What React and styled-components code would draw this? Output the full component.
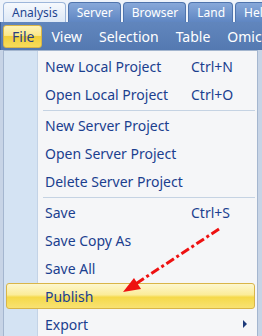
import React from "react"
import styled, { createGlobalStyle } from "styled-components"

const GlobalStyle = createGlobalStyle`
  *, *::before, *::after {
    box-sizing: border-box;
  }
  body {
    margin: 0;
    font-family: "Noto Sans", "Open Sans", sans-serif;
  }
`

const tabs = ["Analysis", "Server", "Browser", "Land", "Help"]
const menus = ["File", "View", "Selection", "Table", "Omics"]

const items = [
  { label: "New Local Project", key: "Ctrl+N" },
  { label: "Open Local Project", key: "Ctrl+O" },
  "sep",
  { label: "New Server Project" },
  { label: "Open Server Project" },
  { label: "Delete Server Project" },
  "sep",
  { label: "Save", key: "Ctrl+S" },
  { label: "Save Copy As" },
  { label: "Save All" },
  { label: "Publish", hot: true },
  { label: "Export", sub: true },
]

const App = () => {
  return (
    <Page>
      <GlobalStyle />
      <TabStrip>
        {tabs.map((t, i) => (
          <Tab key={t} $active={i === 0}>{t}</Tab>
        ))}
      </TabStrip>
      <MenuBar>
        {menus.map((m, i) => (
          <TopItem key={m} $open={i === 0}>{m}</TopItem>
        ))}
      </MenuBar>
      <Dropdown>
        {items.map((it, i) =>
          it === "sep" ? (
            <Separator key={i} />
          ) : (
            <Row key={it.label} $hot={it.hot}>
              <Label>{it.label}</Label>
              {it.key && <Shortcut>{it.key}</Shortcut>}
              {it.sub && <SubArrow />}
            </Row>
          )
        )}
      </Dropdown>
      <Pointer width="262" height="336" viewBox="0 0 262 336">
        <line
          x1="219"
          y1="229"
          x2="134"
          y2="285"
          stroke="#ee1111"
          strokeWidth="3"
          strokeDasharray="9 3 3 3"
        />
        <polygon points="123,292 134,278 141,289" fill="#ee1111" />
      </Pointer>
    </Page>
  )
}

export default App

const Page = styled.div`
  position: relative;
  width: 262px;
  height: 336px;
  overflow: hidden;
  background: #c7d4e6;
`

const TabStrip = styled.div`
  display: flex;
  align-items: flex-end;
  gap: 2px;
  height: 22px;
  padding-left: 3px;
  background: #eef3fa;
  white-space: nowrap;
`

const Tab = styled.div`
  flex: none;
  height: 20px;
  padding: 0 7px 0 8px;
  display: flex;
  align-items: center;
  font-size: 12px;
  border: 1px solid ${p => (p.$active ? "#9db6da" : "#4f74ad")};
  border-bottom: none;
  border-radius: 4px 4px 0 0;
  color: ${p => (p.$active ? "#1f4590" : "#ffffff")};
  background: ${p =>
    p.$active
      ? "linear-gradient(#f6f9fd, #dde8f6)"
      : "linear-gradient(#87a8d9, #5f86c2)"};
`

const MenuBar = styled.div`
  display: flex;
  align-items: center;
  height: 28px;
  padding-left: 2px;
  background: linear-gradient(#6186bd, #5479b1);
  border-left: 1px solid #3f629a;
  white-space: nowrap;
`

const TopItem = styled.div`
  flex: none;
  height: 23px;
  padding: 0 7px 0 8px;
  display: flex;
  align-items: center;
  font-size: 14px;
  border-radius: 3px;
  color: ${p => (p.$open ? "#2b3f80" : "#ffffff")};
  border: 1px solid ${p => (p.$open ? "#d9b548" : "transparent")};
  background: ${p =>
    p.$open
      ? "linear-gradient(#fdf3b8 0%, #fbe78a 45%, #f2cf3a 50%, #f6dc5c 100%)"
      : "transparent"};
`

const Dropdown = styled.div`
  margin-left: 3px;
  width: 255px;
  height: 300px;
  padding-top: 1px;
  border: 1px solid #a4b6cf;
  background: linear-gradient(
    90deg,
    #d4e3f3 0,
    #d4e3f3 33px,
    #c3d3e6 33px,
    #c3d3e6 34px,
    #f5f6f8 34px
  );
`

const Row = styled.div`
  display: flex;
  align-items: center;
  height: ${p => (p.$hot ? "26px" : "28px")};
  margin: ${p => (p.$hot ? "1px 2px" : "0 2px")};
  padding-left: 38px;
  border-radius: 3px;
  border: 1px solid ${p => (p.$hot ? "#d9b548" : "transparent")};
  background: ${p =>
    p.$hot
      ? "linear-gradient(#fdf7cf 0%, #fbec99 45%, #f5d94a 55%, #f8e272 100%)"
      : "transparent"};
`

const Label = styled.span`
  width: 146px;
  font-size: 14px;
  color: #1b3f8f;
`

const Shortcut = styled.span`
  font-size: 14px;
  color: #1b3f8f;
`

const SubArrow = styled.span`
  margin-left: auto;
  margin-right: 7px;
  width: 0;
  height: 0;
  border-top: 4px solid transparent;
  border-bottom: 4px solid transparent;
  border-left: 4px solid #1d3a7a;
`

const Separator = styled.div`
  height: 1px;
  margin: 2px 2px 0 39px;
  background: #c5d3e3;
`

const Pointer = styled.svg`
  position: absolute;
  left: 0;
  top: 0;
  pointer-events: none;
`
